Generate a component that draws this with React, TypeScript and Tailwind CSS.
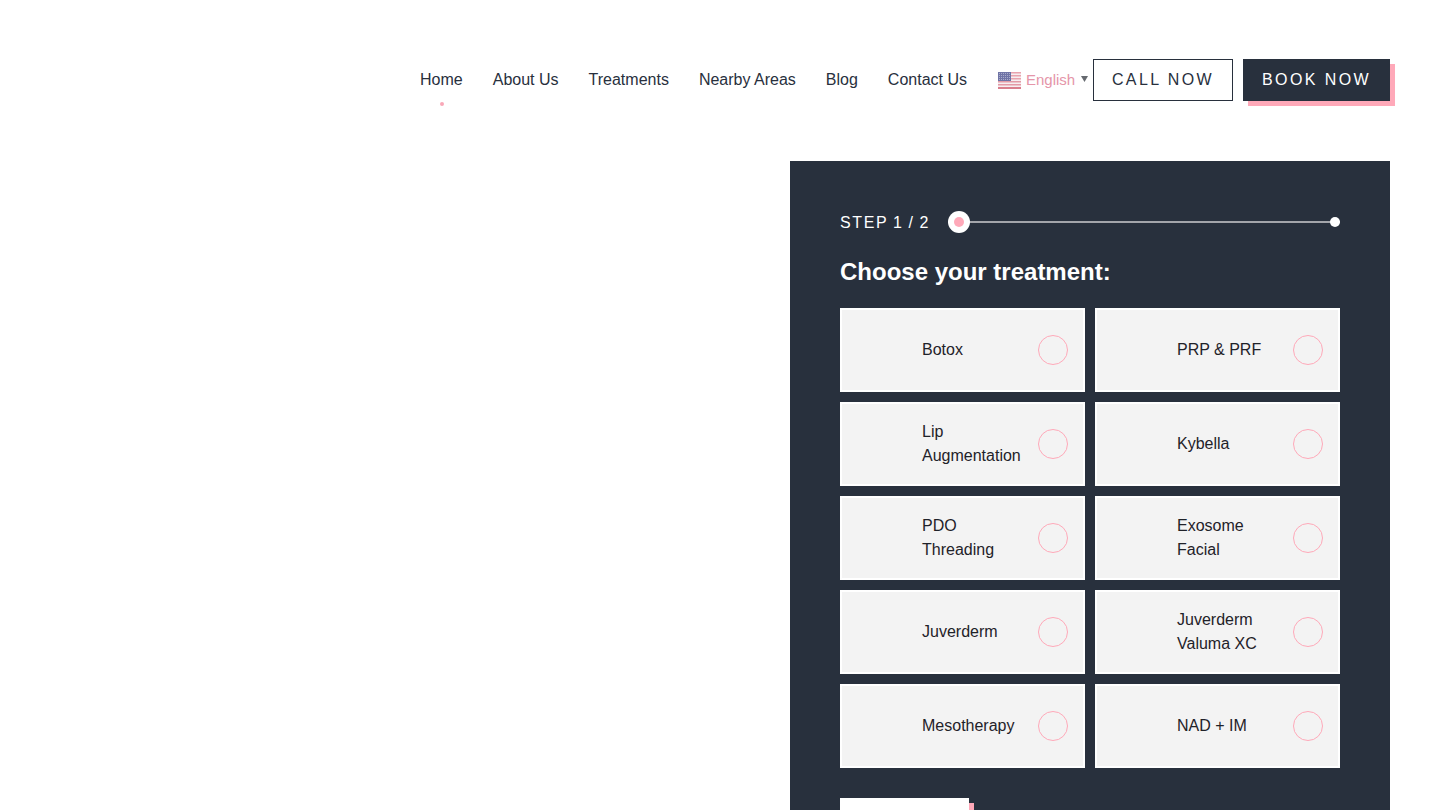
import React from "react";

const nav = ["Home", "About Us", "Treatments", "Nearby Areas", "Blog", "Contact Us"];
const items = [
  "Botox",
  "PRP & PRF",
  "Lip Augmentation",
  "Kybella",
  "PDO Threading",
  "Exosome Facial",
  "Juverderm",
  "Juverderm Valuma XC",
  "Mesotherapy",
  "NAD + IM",
];

function Flag() {
  return (
    <svg width="24" height="18" viewBox="0 0 24 18" className="block shrink-0">
      <defs>
        <pattern id="stars" width="2" height="2" patternUnits="userSpaceOnUse">
          <rect width="2" height="2" fill="#6f74a6" />
          <rect width="1" height="1" fill="#a9acca" />
        </pattern>
      </defs>
      <rect x="1" y="1" width="23" height="17" fill="#f6eef0" />
      <rect x="1" y="1" width="23" height="1.5" fill="#e9a3ae" />
      <rect x="1" y="4" width="23" height="1.5" fill="#e9a3ae" />
      <rect x="1" y="7" width="23" height="1.5" fill="#e9a3ae" />
      <rect x="1" y="10" width="23" height="1.5" fill="#e39aa6" />
      <rect x="1" y="13" width="23" height="1.5" fill="#e39aa6" />
      <rect x="1" y="16" width="23" height="2" fill="#d97f8e" />
      <rect x="1" y="1" width="13" height="9" fill="url(#stars)" />
    </svg>
  );
}

export default function App() {
  return (
    <div className="h-screen overflow-hidden bg-white font-['Liberation_Sans',Arial,sans-serif] text-[#28303d]">
      <header className="flex items-start justify-end pr-[50px] pt-[59px]">
        <nav className="flex items-center gap-[30px] text-[16px] leading-[42px]">
          {nav.map((n, i) => (
            <a key={n} className="relative block">
              {n}
              {i === 0 && (
                <span className="absolute bottom-[-5px] left-[20px] h-1 w-1 rounded-full bg-[#f9a8b8]" />
              )}
            </a>
          ))}
        </nav>
        <div className="ml-[30px] flex h-[42px] w-[96px] items-center">
          <Flag />
          <span className="ml-[5px] text-[15px] text-[#e595a9]">English</span>
          <svg width="7" height="6" viewBox="0 0 7 6" className="mb-[3px] ml-[6px] shrink-0">
            <polygon points="0,0 7,0 3.5,6" fill="#666a70" />
          </svg>
        </div>
        <a className="flex h-[42px] w-[140px] items-center justify-center border border-[#28303d] text-[16px] tracking-[2.4px]">
          CALL NOW
        </a>
        <a className="ml-[10px] flex h-[42px] w-[147px] items-center justify-center bg-[#28303d] text-[16px] tracking-[2.4px] text-white shadow-[5px_5px_0_#ffa9b9]">
          BOOK NOW
        </a>
      </header>
      <div className="mt-[60px] flex justify-end pr-[50px]">
        <section className="w-[600px] bg-[#28303d] px-[50px] pt-[50px] pb-[40px] text-white">
          <div className="flex h-[22px] items-center">
            <span className="pt-[1px] text-[16px] tracking-[1.6px] whitespace-nowrap [word-spacing:-1px]">STEP 1 / 2</span>
            <div className="relative ml-[18px] flex h-[22px] flex-1 items-center">
              <div className="h-[2px] w-full bg-[#a3a5ab]" />
              <span className="absolute left-0 top-0 flex h-[22px] w-[22px] items-center justify-center rounded-full bg-white">
                <span className="h-[10px] w-[10px] rounded-full bg-[#ffa9b9]" />
              </span>
              <span className="absolute right-0 top-[6px] h-[10px] w-[10px] rounded-full bg-white" />
            </div>
          </div>
          <h2 className="mt-[23px] text-[24px] font-bold leading-[32px]">Choose your treatment:</h2>
          <div className="mt-[20px] grid grid-cols-2 gap-[10px]">
            {items.map((t) => (
              <div
                key={t}
                className="flex h-[84px] items-center border-2 border-white bg-[#f3f3f3] pl-[80px] pr-[15px] text-[16px] leading-[24px] text-[#1f2229]"
              >
                <span className="w-[110px]">{t}</span>
                <span className="ml-auto h-[30px] w-[30px] shrink-0 rounded-full border border-[#ffa9b9]" />
              </div>
            ))}
          </div>
          <button className="mt-[30px] block h-[42px] w-[129px] bg-white shadow-[5px_5px_0_#ffa9b9]" />
        </section>
      </div>
    </div>
  );
}
